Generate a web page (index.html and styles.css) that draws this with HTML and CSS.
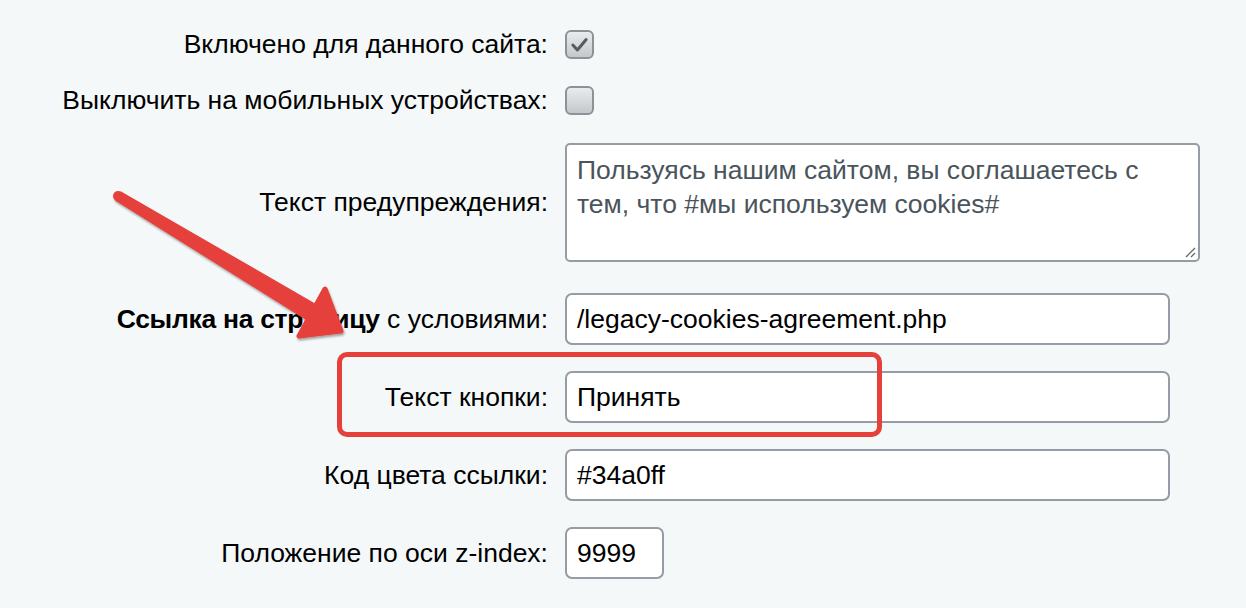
FILE: index.html
```html
<!DOCTYPE html>
<html lang="ru">
<head>
<meta charset="utf-8">
<title>Cookies</title>
<link rel="stylesheet" href="styles.css">
</head>
<body>
<div class="page">
  <form class="form">
    <div class="row row-cb1">
      <label class="lbl">Включено для данного сайта:</label>
      <span class="cb checked"><svg viewBox="0 0 30 30" width="30" height="30"><path d="M7 15 L12.5 21 L23 8.5" fill="none" stroke="#575b60" stroke-width="3.6" stroke-linecap="round" stroke-linejoin="round"/></svg></span>
    </div>
    <div class="row row-cb2">
      <label class="lbl">Выключить на мобильных устройствах:</label>
      <span class="cb"></span>
    </div>
    <div class="row row-ta">
      <label class="lbl">Текст предупреждения:</label>
      <div class="ta">Пользуясь нашим сайтом, вы соглашаетесь с тем, что #мы используем cookies#<svg class="grip" viewBox="0 0 12 12" width="12" height="12"><path d="M11 2 L2 11 M11 7 L7 11" stroke="#666" stroke-width="1.3" fill="none"/></svg></div>
    </div>
    <div class="row row-in1">
      <label class="lbl"><b>Ссылка на страницу</b> с условиями:</label>
      <div class="inp wide">/legacy-cookies-agreement.php</div>
    </div>
    <div class="row row-in">
      <label class="lbl">Текст кнопки:</label>
      <div class="inp wide">Принять</div>
    </div>
    <div class="row row-in">
      <label class="lbl">Код цвета ссылки:</label>
      <div class="inp wide">#34a0ff</div>
    </div>
    <div class="row row-in">
      <label class="lbl">Положение по оси z-index:</label>
      <div class="inp small">9999</div>
    </div>
  </form>
  <div class="highlight"></div>
  <svg class="arrow" width="1246" height="608" viewBox="0 0 1246 608">
    <defs>
      <filter id="sh" x="-10%" y="-10%" width="130%" height="130%">
        <feDropShadow dx="1" dy="2" stdDeviation="1" flood-color="#000" flood-opacity="0.35"/>
      </filter>
    </defs>
    <g filter="url(#sh)" fill="#e5413a" stroke="#e5413a" stroke-linejoin="round">
      <circle cx="118" cy="196" r="5" stroke="none"/>
      <polygon points="120.7,191.8 315.8,304.4 306.2,319.6 115.3,200.2" stroke-width="1"/>
      <polygon points="325,289 299,336 341,331" stroke-width="5"/>
    </g>
  </svg>
</div>
</body>
</html>
```

FILE: styles.css
```css
html, body {
  margin: 0;
  padding: 0;
  background: #f5f8f9;
}
body {
  font-family: "Liberation Sans", Arial, Helvetica, sans-serif;
  font-size: 26.5px;
  color: #000;
}
.page {
  position: relative;
  width: 1246px;
  height: 608px;
  overflow: hidden;
}
.form {
  display: flex;
  flex-direction: column;
  padding-top: 30px;
}
.row {
  display: flex;
  align-items: center;
  gap: 17px;
}
.row-cb2 { margin-top: 27px; }
.row-ta { margin-top: 28px; }
.row-in1 { margin-top: 31px; }
.row-in { margin-top: 26px; }
.lbl {
  width: 548px;
  text-align: right;
  flex: none;
  white-space: nowrap;
  line-height: 29px;
}
.lbl b { font-weight: bold; letter-spacing: -0.3px; }
.cb {
  width: 29px;
  height: 29px;
  box-sizing: border-box;
  border: 2px solid #8c9298;
  border-radius: 6px;
  background: linear-gradient(#e9ecee, #c4c8cc);
  display: flex;
  align-items: center;
  justify-content: center;
}
.cb svg { width: 26px; height: 26px; }
.ta {
  position: relative;
  width: 635px;
  height: 119px;
  box-sizing: border-box;
  border: 2px solid #959ca5;
  border-radius: 5px;
  background: #fff;
  color: #4a545b;
  padding: 8px 40px 0 10px;
  line-height: 34px;
}
.grip {
  position: absolute;
  right: 2px;
  bottom: 2px;
}
.inp {
  height: 52px;
  box-sizing: border-box;
  border: 2px solid #959ca5;
  border-radius: 7px;
  background: #fff;
  padding: 0 10px;
  display: flex;
  align-items: center;
}
.inp.wide { width: 605px; }
.inp.small { width: 99px; }
.highlight {
  position: absolute;
  left: 337px;
  top: 352px;
  width: 545px;
  height: 85px;
  box-sizing: border-box;
  border: 5px solid #e5413a;
  border-radius: 10px;
}
.arrow {
  position: absolute;
  left: 0;
  top: 0;
  pointer-events: none;
}
```
